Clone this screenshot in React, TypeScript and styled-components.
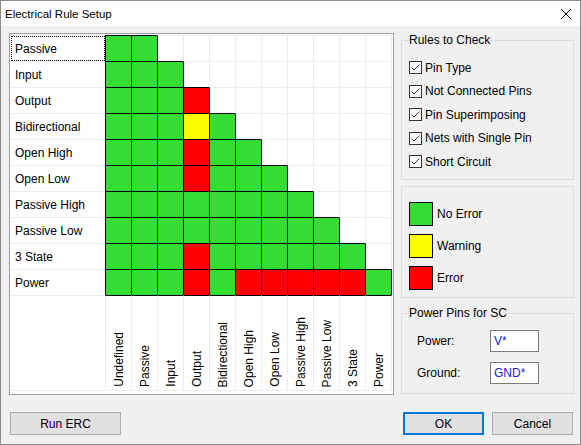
import React from 'react'
import styled, { createGlobalStyle } from 'styled-components'

const GlobalStyle = createGlobalStyle`
  html, body {
    margin: 0;
    padding: 0;
    background: #ffffff;
  }
  body {
    font-family: "Liberation Sans", Arial, sans-serif;
    font-size: 12px;
    color: #000;
  }
  * {
    box-sizing: border-box;
  }
`

const GREEN = 'rgb(51, 221, 51)'
const RED = '#ff0000'
const YELLOW = '#ffff00'
const LIGHT = '#ececec'

const FILLS: Record<string, string> = { G: GREEN, R: RED, Y: YELLOW }

const ROWS = [
  'Passive',
  'Input',
  'Output',
  'Bidirectional',
  'Open High',
  'Open Low',
  'Passive High',
  'Passive Low',
  '3 State',
  'Power',
]

const COLUMNS = ['Undefined', ...ROWS]

const MATRIX = [
  'GG',
  'GGG',
  'GGGR',
  'GGGYG',
  'GGGRGG',
  'GGGRGGG',
  'GGGGGGGG',
  'GGGGGGGGG',
  'GGGRGGGGGG',
  'GGGRGRRRRRG',
]

const RULES = [
  'Pin Type',
  'Not Connected Pins',
  'Pin Superimposing',
  'Nets with Single Pin',
  'Short Circuit',
]

const Window = styled.div`
  width: 581px;
  height: 445px;
  border: 1px solid #8c8c8c;
  display: flex;
  flex-direction: column;
  background: #f0f0f0;
`

const TitleBar = styled.div`
  height: 25px;
  background: #ffffff;
  display: flex;
  align-items: center;
  justify-content: space-between;
  padding: 0 9px 0 4px;
  font-size: 11.5px;
`

const CloseIcon = styled.svg`
  width: 10px;
  height: 10px;
`

const Body = styled.div`
  flex: 1;
  display: flex;
  flex-direction: column;
  padding: 7px 6px 9px 8px;
`

const Main = styled.div`
  display: flex;
  gap: 7px;
  height: 362px;
`

const MatrixPanel = styled.div`
  width: 385px;
  border: 1px solid #a0a0a0;
  background: #ffffff;
  padding-top: 1px;
`

const Grid = styled.div`
  display: grid;
  grid-template-columns: 95px repeat(10, 26px) 27px;
  grid-template-rows: repeat(10, 26px) 96px;
`

const LabelCell = styled.div`
  border-top: 1px solid ${LIGHT};
  padding: 1px 1px 1px 2px;
  display: flex;
`

const LabelText = styled.div<{ $focused?: boolean }>`
  flex: 1;
  display: flex;
  align-items: center;
  padding-left: 3px;
  outline: ${(p) => (p.$focused ? '1px dotted #000' : 'none')};
`

const Cell = styled.div<{ $fill?: string; $darkLeft?: boolean; $last?: boolean }>`
  background: ${(p) => p.$fill ?? '#ffffff'};
  border-top: 1px solid ${(p) => (p.$fill ? '#000' : LIGHT)};
  border-left: 1px solid ${(p) => (p.$fill || p.$darkLeft ? '#000' : LIGHT)};
  border-right: ${(p) => (p.$last ? `1px solid ${p.$fill ? '#000' : LIGHT}` : 'none')};
`

const CornerCell = styled.div`
  border-top: 1px solid ${LIGHT};
  border-bottom: 1px solid ${LIGHT};
`

const HeaderCell = styled.div<{ $last?: boolean }>`
  border-top: 1px solid #000;
  border-bottom: 1px solid ${LIGHT};
  border-left: 1px solid ${LIGHT};
  border-right: ${(p) => (p.$last ? `1px solid ${LIGHT}` : 'none')};
  display: flex;
  flex-direction: column;
  justify-content: flex-end;
  align-items: center;
  padding-bottom: 3px;
`

const VerticalText = styled.span`
  writing-mode: vertical-rl;
  transform: rotate(180deg);
  line-height: 14px;
  white-space: nowrap;
`

const Side = styled.div`
  width: 173px;
  display: flex;
  flex-direction: column;
`

const Group = styled.fieldset<{ $height: number }>`
  margin: 0;
  height: ${(p) => p.$height}px;
  border: 1px solid #dcdcdc;
  padding: 0 7px;
  min-width: 0;
`

const GroupTitle = styled.legend`
  padding: 0;
  line-height: 14px;
`

const CheckList = styled.div`
  padding-top: 9px;
  display: flex;
  flex-direction: column;
`

const CheckRow = styled.label`
  height: 23.5px;
  display: flex;
  align-items: center;
  gap: 3px;
`

const CheckBox = styled.span`
  width: 13px;
  height: 13px;
  border: 1px solid #333;
  background: #fff;
  display: flex;
`

const LegendList = styled.div`
  padding-top: 15px;
  display: flex;
  flex-direction: column;
  gap: 8px;
`

const LegendRow = styled.div`
  display: flex;
  align-items: center;
  gap: 4px;
`

const Swatch = styled.span<{ $color: string }>`
  width: 24px;
  height: 24px;
  border: 1px solid #000;
  background: ${(p) => p.$color};
`

const FieldList = styled.div`
  padding: 10px 0 0 8px;
  display: flex;
  flex-direction: column;
  gap: 10px;
`

const FieldRow = styled.div`
  display: flex;
  align-items: center;
`

const FieldLabel = styled.span`
  width: 73px;
`

const TextBox = styled.div`
  width: 49px;
  height: 22px;
  border: 1px solid #7a7a7a;
  background: #fff;
  color: #1c1cd8;
  padding-left: 3px;
  display: flex;
  align-items: center;
`

const Footer = styled.div`
  margin-top: 17px;
  display: flex;
  align-items: center;
  padding-left: 1px;
`

const Button = styled.div<{ $width: number; $default?: boolean }>`
  width: ${(p) => p.$width}px;
  height: 23px;
  background: #e1e1e1;
  border: ${(p) => (p.$default ? '2px solid #0078d7' : '1px solid #adadad')};
  display: flex;
  align-items: center;
  justify-content: center;
`

const Spacer = styled.div`
  flex: 1;
`

const ButtonGroup = styled.div`
  display: flex;
  gap: 8px;
  padding-right: 1px;
`

function Check() {
  return (
    <CheckBox>
      <svg width="11" height="11" viewBox="0 0 11 11">
        <path d="M1.5 5.5 L4 8 L9.5 2.5" fill="none" stroke="#333" strokeWidth="1" />
      </svg>
    </CheckBox>
  )
}

export default function App() {
  return (
    <>
      <GlobalStyle />
      <Window>
        <TitleBar>
          <span>Electrical Rule Setup</span>
          <CloseIcon viewBox="0 0 10 10">
            <path d="M0 0 L10 10 M10 0 L0 10" stroke="#000" strokeWidth="1" />
          </CloseIcon>
        </TitleBar>
        <Body>
          <Main>
            <MatrixPanel>
              <Grid>
                {ROWS.map((row, r) => (
                  <React.Fragment key={row}>
                    <LabelCell>
                      <LabelText $focused={r === 0}>{row}</LabelText>
                    </LabelCell>
                    {COLUMNS.map((col, c) => {
                      const code = MATRIX[r][c]
                      return (
                        <Cell
                          key={col}
                          $fill={code ? FILLS[code] : undefined}
                          $darkLeft={c === MATRIX[r].length}
                          $last={c === COLUMNS.length - 1}
                        />
                      )
                    })}
                  </React.Fragment>
                ))}
                <CornerCell />
                {COLUMNS.map((col, c) => (
                  <HeaderCell key={col} $last={c === COLUMNS.length - 1}>
                    <VerticalText>{col}</VerticalText>
                  </HeaderCell>
                ))}
              </Grid>
            </MatrixPanel>
            <Side>
              <Group $height={147}>
                <GroupTitle>Rules to Check</GroupTitle>
                <CheckList>
                  {RULES.map((rule) => (
                    <CheckRow key={rule}>
                      <Check />
                      {rule}
                    </CheckRow>
                  ))}
                </CheckList>
              </Group>
              <Group $height={112} style={{ marginTop: 6 }}>
                <LegendList>
                  <LegendRow>
                    <Swatch $color={GREEN} />
                    No Error
                  </LegendRow>
                  <LegendRow>
                    <Swatch $color={YELLOW} />
                    Warning
                  </LegendRow>
                  <LegendRow>
                    <Swatch $color={RED} />
                    Error
                  </LegendRow>
                </LegendList>
              </Group>
              <Group $height={88} style={{ marginTop: 8 }}>
                <GroupTitle>Power Pins for SC</GroupTitle>
                <FieldList>
                  <FieldRow>
                    <FieldLabel>Power:</FieldLabel>
                    <TextBox>V*</TextBox>
                  </FieldRow>
                  <FieldRow>
                    <FieldLabel>Ground:</FieldLabel>
                    <TextBox>GND*</TextBox>
                  </FieldRow>
                </FieldList>
              </Group>
            </Side>
          </Main>
          <Footer>
            <Button $width={111}>Run ERC</Button>
            <Spacer />
            <ButtonGroup>
              <Button $width={81} $default>
                OK
              </Button>
              <Button $width={81}>Cancel</Button>
            </ButtonGroup>
          </Footer>
        </Body>
      </Window>
    </>
  )
}
